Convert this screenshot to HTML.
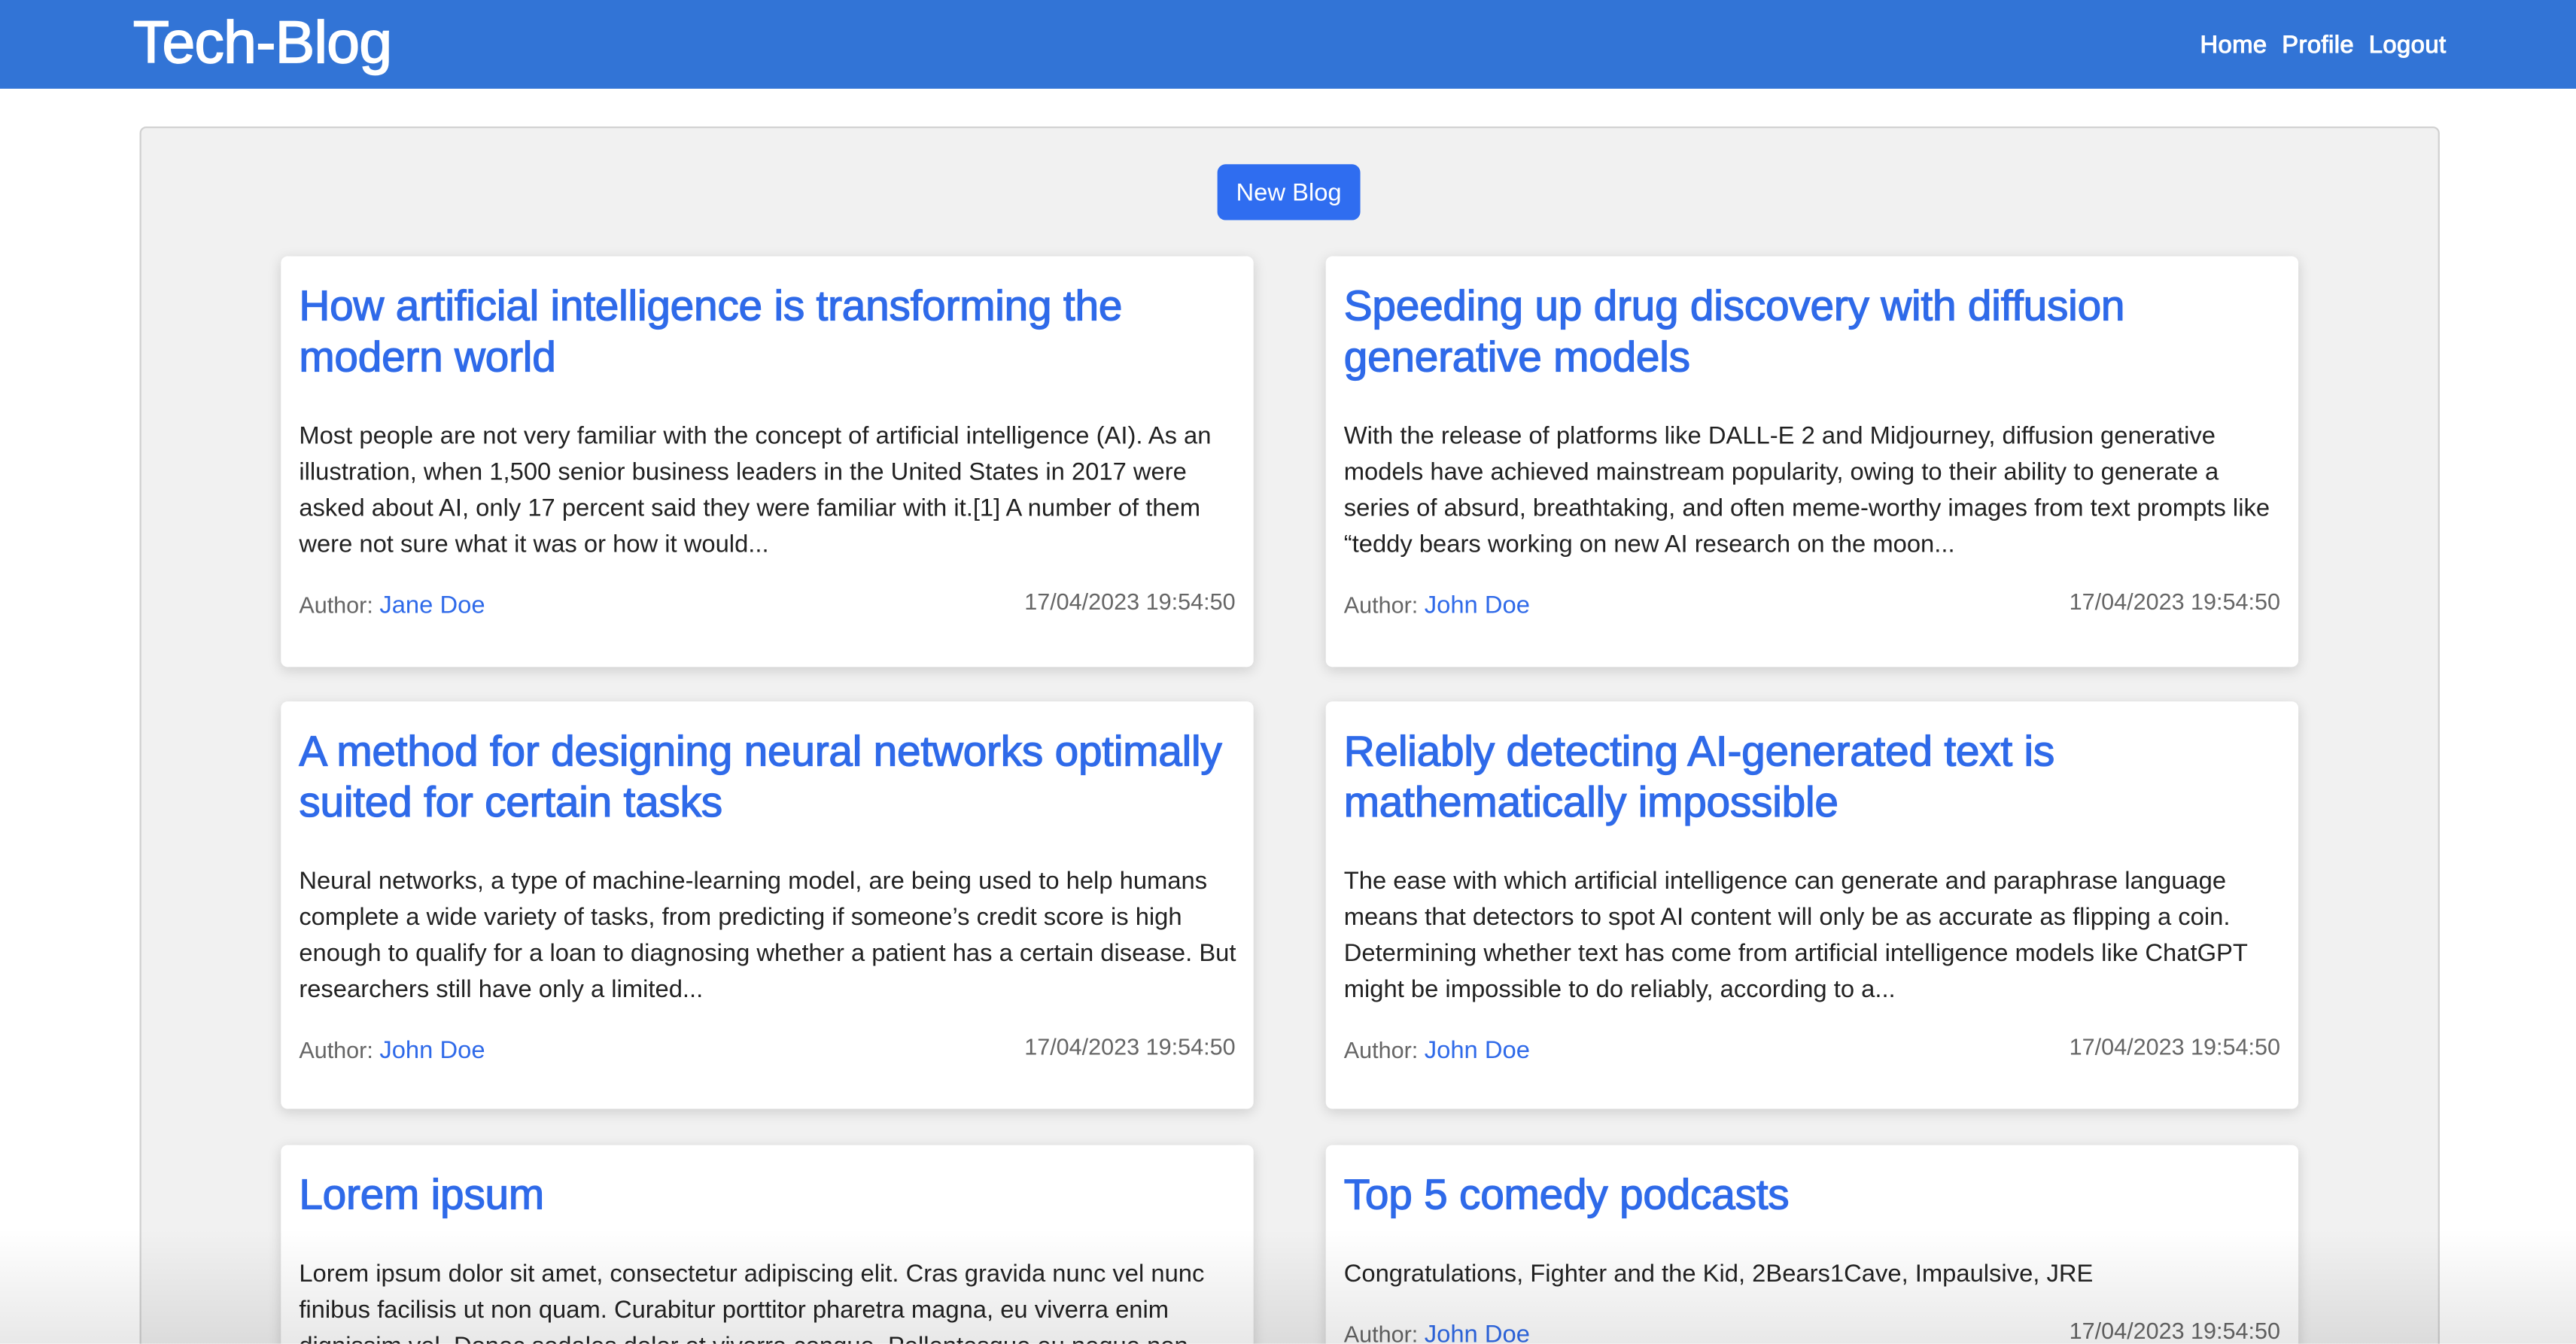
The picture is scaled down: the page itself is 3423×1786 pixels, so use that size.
<!DOCTYPE html>
<html><head><meta charset="utf-8"><style>
html,body{margin:0;width:3423px;height:1785px;overflow:hidden;background:#fff}
#s{position:absolute;left:0;top:0;width:1568px;height:818px;overflow:hidden;transform:scale(2.18304);transform-origin:0 0;font-family:"Liberation Sans",Helvetica,Arial,sans-serif;background:#fff}
.nav{height:54px;background:#3274d6;position:relative;color:#fff}
.brand{position:absolute;left:81px;top:4px;font-size:36px;line-height:44px;letter-spacing:-0.3px;-webkit-text-stroke:0.8px #fff}
.links{position:absolute;right:79px;top:18px;font-size:15px;line-height:20px;-webkit-text-stroke:0.5px #fff;letter-spacing:0.2px}
.links span{margin-left:9px}
.wrap{position:absolute;left:85px;top:77px;width:1398px;height:760px;background:#f1f1f1;border:1px solid #d0d0d0;border-radius:4px}
.btn{position:absolute;left:655px;top:22px;width:87px;height:34px;background:#2f6df0;color:#fff;border-radius:5px;font-size:15px;line-height:35px;text-align:center}
.card{position:absolute;width:592px;background:#fff;border-radius:4px;box-shadow:0 2px 8px rgba(0,0,0,.15);box-sizing:border-box;padding:0 11px}
.card h2{margin:15px 0 0;font-size:26px;line-height:31px;font-weight:normal;color:#2f6ae9;letter-spacing:-0.1px;-webkit-text-stroke:0.6px #2f6ae9}
.card p{margin:22px 0 0;font-size:15px;line-height:22px;color:#222;white-space:nowrap}
.meta{margin-top:15px;font-size:14px;line-height:20px;color:#666;position:relative}
.meta a{color:#2f6ae9;font-size:15px}
.meta .d{position:absolute;right:0;top:-2px}
.shade{position:absolute;left:0;right:0;bottom:0;height:70px;background:linear-gradient(rgba(0,0,0,0),rgba(0,0,0,.09))}
</style></head><body><div id="s">
<div class="nav"><div class="brand">Tech-Blog</div><div class="links"><span>Home</span><span>Profile</span><span>Logout</span></div></div>
<div class="wrap">
<div class="btn">New Blog</div>
<div class="card" style="left:85px;top:78px;height:250px"><h2>How artificial intelligence is transforming the modern world</h2><p>Most people are not very familiar with the concept of artificial intelligence (AI). As an<br>illustration, when 1,500 senior business leaders in the United States in 2017 were<br>asked about AI, only 17 percent said they were familiar with it.[1] A number of them<br>were not sure what it was or how it would...</p><div class="meta">Author: <a>Jane Doe</a><span class="d">17/04/2023 19:54:50</span></div></div>
<div class="card" style="left:721px;top:78px;height:250px"><h2>Speeding up drug discovery with diffusion generative models</h2><p>With the release of platforms like DALL-E 2 and Midjourney, diffusion generative<br>models have achieved mainstream popularity, owing to their ability to generate a<br>series of absurd, breathtaking, and often meme-worthy images from text prompts like<br>“teddy bears working on new AI research on the moon...</p><div class="meta">Author: <a>John Doe</a><span class="d">17/04/2023 19:54:50</span></div></div>
<div class="card" style="left:85px;top:349px;height:248px"><h2>A method for designing neural networks optimally suited for certain tasks</h2><p>Neural networks, a type of machine-learning model, are being used to help humans<br>complete a wide variety of tasks, from predicting if someone’s credit score is high<br>enough to qualify for a loan to diagnosing whether a patient has a certain disease. But<br>researchers still have only a limited...</p><div class="meta">Author: <a>John Doe</a><span class="d">17/04/2023 19:54:50</span></div></div>
<div class="card" style="left:721px;top:349px;height:248px"><h2>Reliably detecting AI-generated text is mathematically impossible</h2><p>The ease with which artificial intelligence can generate and paraphrase language<br>means that detectors to spot AI content will only be as accurate as flipping a coin.<br>Determining whether text has come from artificial intelligence models like ChatGPT<br>might be impossible to do reliably, according to a...</p><div class="meta">Author: <a>John Doe</a><span class="d">17/04/2023 19:54:50</span></div></div>
<div class="card" style="left:85px;top:619px;height:200px"><h2>Lorem ipsum</h2><p>Lorem ipsum dolor sit amet, consectetur adipiscing elit. Cras gravida nunc vel nunc<br>finibus facilisis ut non quam. Curabitur porttitor pharetra magna, eu viverra enim<br>dignissim vel. Donec sodales dolor et viverra congue. Pellentesque eu neque non</p></div>
<div class="card" style="left:721px;top:619px;height:200px"><h2>Top 5 comedy podcasts</h2><p>Congratulations, Fighter and the Kid, 2Bears1Cave, Impaulsive, JRE</p><div class="meta">Author: <a>John Doe</a><span class="d">17/04/2023 19:54:50</span></div></div>
</div>
<div class="shade"></div>
</div></body></html>
